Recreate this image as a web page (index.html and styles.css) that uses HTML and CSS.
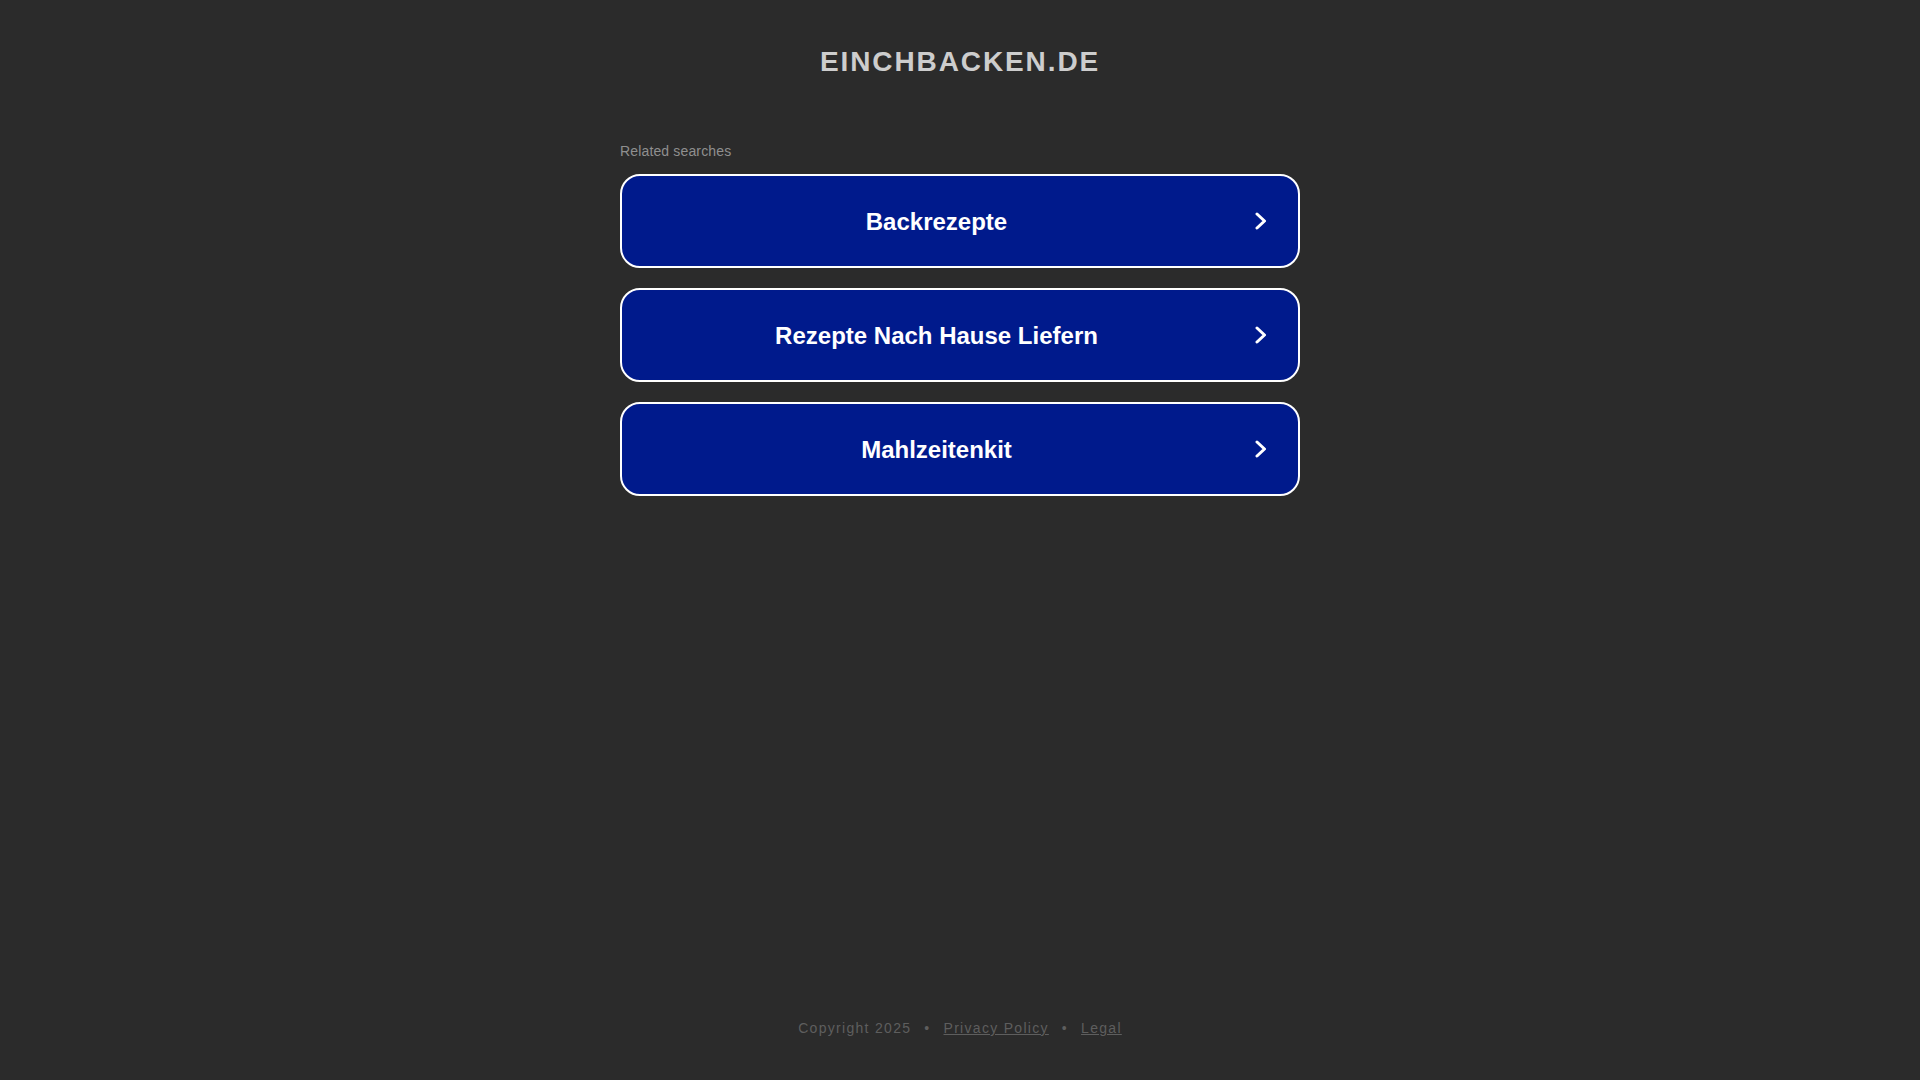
FILE: index.html
```html
<!DOCTYPE html>
<html lang="de">
<head>
<meta charset="utf-8">
<title>einchbacken.de</title>
<link rel="stylesheet" href="styles.css">
</head>
<body>
<div class="page">
  <header class="header">
    <h1 class="domain">EINCHBACKEN.DE</h1>
  </header>
  <main class="content">
    <div class="related-label">Related searches</div>
    <ul class="links">
      <li><a class="link-btn" href="#"><span class="label">Backrezepte</span><svg class="chev" width="12" height="18" viewBox="0 0 12 18"><path d="M2 2 L9.5 9 L2 16" fill="none" stroke="#fff" stroke-width="3" stroke-linecap="round" stroke-linejoin="round"/></svg></a></li>
      <li><a class="link-btn" href="#"><span class="label">Rezepte Nach Hause Liefern</span><svg class="chev" width="12" height="18" viewBox="0 0 12 18"><path d="M2 2 L9.5 9 L2 16" fill="none" stroke="#fff" stroke-width="3" stroke-linecap="round" stroke-linejoin="round"/></svg></a></li>
      <li><a class="link-btn" href="#"><span class="label">Mahlzeitenkit</span><svg class="chev" width="12" height="18" viewBox="0 0 12 18"><path d="M2 2 L9.5 9 L2 16" fill="none" stroke="#fff" stroke-width="3" stroke-linecap="round" stroke-linejoin="round"/></svg></a></li>
    </ul>
  </main>
  <footer class="footer">
    <span class="copy">Copyright 2025</span><span class="dot">•</span><a class="flink" href="#">Privacy Policy</a><span class="dot">•</span><a class="flink" href="#">Legal</a>
  </footer>
</div>
</body>
</html>
```

FILE: styles.css
```css
html, body {
  margin: 0;
  padding: 0;
  background: #2b2b2b;
}
body {
  font-family: "Liberation Sans", Arial, sans-serif;
}
.page {
  min-height: 100vh;
  display: flex;
  flex-direction: column;
}
.header {
  padding-top: 46px;
  text-align: center;
}
.domain {
  margin: 0;
  font-size: 28px;
  line-height: 32px;
  font-weight: bold;
  letter-spacing: 1.9px;
  color: #cdcdcd;
}
.content {
  width: 680px;
  margin: 65px auto 0;
}
.related-label {
  font-size: 14px;
  line-height: 16px;
  letter-spacing: 0.15px;
  color: #8f8f8f;
  margin-bottom: 15px;
}
.links {
  list-style: none;
  margin: 0;
  padding: 0;
  display: flex;
  flex-direction: column;
  gap: 20px;
}
.link-btn {
  display: flex;
  align-items: center;
  height: 90px;
  border: 2px solid #ffffff;
  border-radius: 20px;
  background: #001a8c;
  text-decoration: none;
  color: #ffffff;
}
.label {
  flex: 1;
  text-align: center;
  font-size: 24px;
  font-weight: bold;
  padding-top: 2px;
}
.chev {
  margin-left: 4px;
  margin-right: 31px;
  display: block;
}
.footer {
  margin-top: auto;
  padding-bottom: 44px;
  text-align: center;
  font-size: 14px;
  line-height: 16px;
  letter-spacing: 1.3px;
  color: #5e5e5e;
}
.dot {
  margin: 0 13px;
}
.flink {
  color: #5e5e5e;
  text-decoration: underline;
}
```
